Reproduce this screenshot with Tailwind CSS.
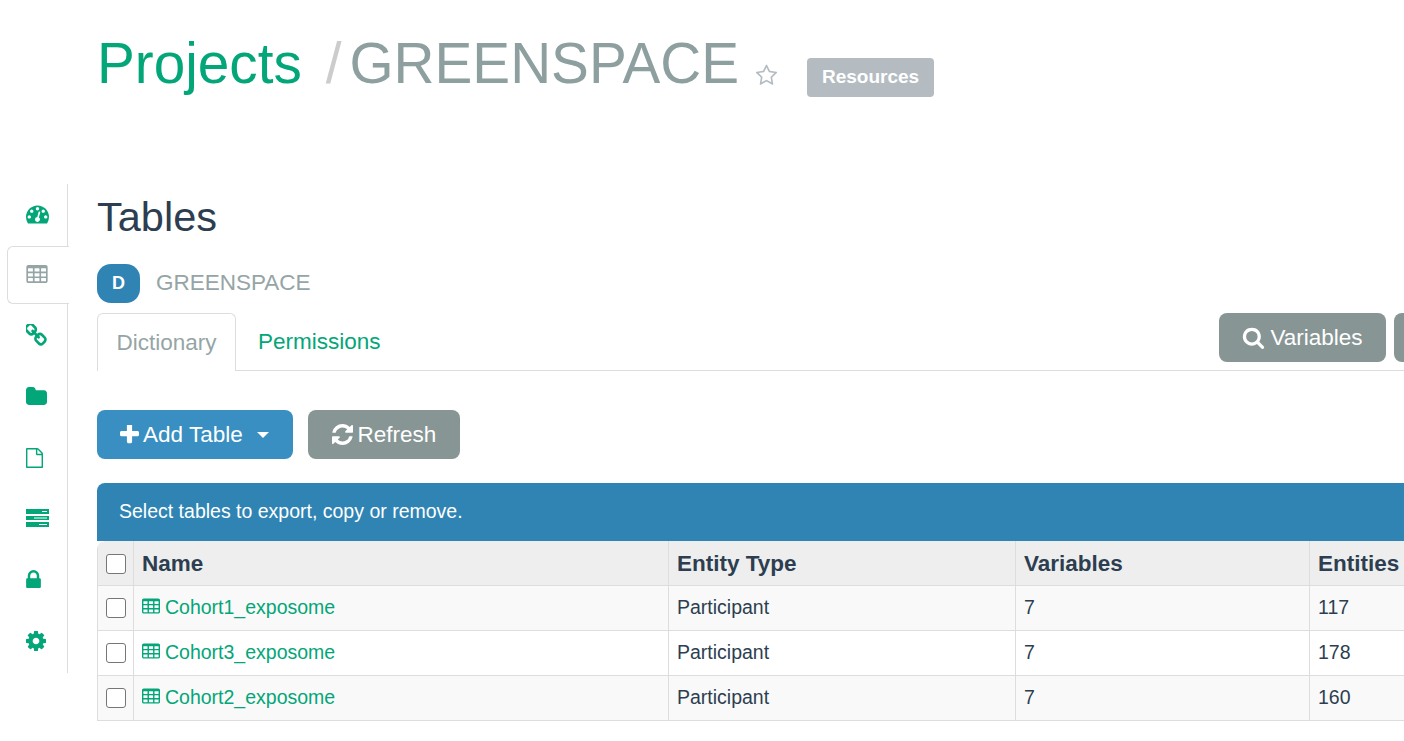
<!DOCTYPE html>
<html lang="en">
<head>
<meta charset="utf-8">
<title>Tables</title>
<script src="https://cdn.jsdelivr.net/npm/@tailwindcss/browser@4"></script>
</head>
<body class="w-[1404px] h-[741px] overflow-hidden bg-white font-['Liberation_Sans',Arial,sans-serif] text-[19.5px] text-[#2c3e50]">
<header class="h-[184px] pl-[97px] pt-[28px] flex items-start">
  <a class="text-[56.7px] leading-[72px] text-[#03a678]">Projects</a>
  <span class="ml-[24px] text-[56.7px] leading-[72px] text-[#ccc]">/</span>
  <span class="ml-[8px] text-[56.7px] leading-[72px] text-[#8e9f9f]">GREENSPACE</span>
  <svg class="ml-[16px] mt-[36px] w-[23px] h-[23px] text-[#b4bcc2]" viewBox="0 0 1792 1792" fill="currentColor"><path d="M1201 1004l306-297-422-62-189-382-189 382-422 62 306 297-73 421 378-199 377 199zm527-357q0 22-26 48l-363 354 86 500q1 7 1 20 0 50-41 50-19 0-40-12l-449-236-449 236q-22 12-40 12-21 0-31.5-14.5t-10.5-35.5q0-6 2-20l86-500-364-354q-25-27-25-48 0-37 56-46l502-73 225-455q19-41 49-41t49 41l225 455 502 73q56 9 56 46z"/></svg>
  <span class="ml-[29px] mt-[30px] w-[127px] h-[39px] rounded-[4px] bg-[#b4bcc2] text-white font-bold text-[19px] flex items-center justify-center">Resources</span>
</header>
<div class="flex">
  <nav class="w-[68px] h-[489px] shrink-0 border-r border-[#ddd] flex flex-col text-[#03a678]">
    <a class="h-[62px] shrink-0 flex items-center pl-[26px] pb-[2px]">
      <svg class="w-[23px] h-[19px]" viewBox="0 256 1792 1408" fill="currentColor"><path d="M384 1152q0-53-37.5-90.5t-90.5-37.5-90.5 37.5-37.5 90.5 37.5 90.5 90.5 37.5 90.5-37.5 37.5-90.5zm192-448q0-53-37.5-90.5t-90.5-37.5-90.5 37.5-37.5 90.5 37.5 90.5 90.5 37.5 90.5-37.5 37.5-90.5zm428 481l101-382q6-26-7.5-48.5t-38.5-29.5-48 6.5-30 39.5l-101 382q-60 5-107 43.5t-63 98.5q-20 77 20 146t117 89 146-20 89-117q16-60-6-117t-72-91zm660-33q0-53-37.5-90.5t-90.5-37.5-90.5 37.5-37.5 90.5 37.5 90.5 90.5 37.5 90.5-37.5 37.5-90.5zm-640-640q0-53-37.5-90.5t-90.5-37.5-90.5 37.5-37.5 90.5 37.5 90.5 90.5 37.5 90.5-37.5 37.5-90.5zm448 192q0-53-37.5-90.5t-90.5-37.5-90.5 37.5-37.5 90.5 37.5 90.5 90.5 37.5 90.5-37.5 37.5-90.5zm320 448q0 261-141 483-19 29-54 29h-1402q-35 0-54-29-141-221-141-483 0-182 71-348t191-286 286-191 348-71 348 71 286 191 191 286 71 348z"/></svg>
    </a>
    <a class="h-[58px] shrink-0 ml-[7px] w-[62px] pl-[18px] pb-[2px] bg-white border border-r-0 border-[#ddd] rounded-l-[6px] flex items-center text-[#95a5a6] relative">
      <svg class="w-[22px] h-[18px]" viewBox="64 128 1664 1408" fill="currentColor"><path d="M576 1376v-192q0-14-9-23t-23-9h-320q-14 0-23 9t-9 23v192q0 14 9 23t23 9h320q14 0 23-9t9-23zm0-384v-192q0-14-9-23t-23-9h-320q-14 0-23 9t-9 23v192q0 14 9 23t23 9h320q14 0 23-9t9-23zm512 384v-192q0-14-9-23t-23-9h-320q-14 0-23 9t-9 23v192q0 14 9 23t23 9h320q14 0 23-9t9-23zm-512-768v-192q0-14-9-23t-23-9h-320q-14 0-23 9t-9 23v192q0 14 9 23t23 9h320q14 0 23-9t9-23zm512 384v-192q0-14-9-23t-23-9h-320q-14 0-23 9t-9 23v192q0 14 9 23t23 9h320q14 0 23-9t9-23zm512 384v-192q0-14-9-23t-23-9h-320q-14 0-23 9t-9 23v192q0 14 9 23t23 9h320q14 0 23-9t9-23zm-512-768v-192q0-14-9-23t-23-9h-320q-14 0-23 9t-9 23v192q0 14 9 23t23 9h320q14 0 23-9t9-23zm512 384v-192q0-14-9-23t-23-9h-320q-14 0-23 9t-9 23v192q0 14 9 23t23 9h320q14 0 23-9t9-23zm0-384v-192q0-14-9-23t-23-9h-320q-14 0-23 9t-9 23v192q0 14 9 23t23 9h320q14 0 23-9t9-23zm128-320v1088q0 66-47 113t-113 47h-1344q-66 0-113-47t-47-113v-1088q0-66 47-113t113-47h1344q66 0 113 47t47 113z"/></svg>
    </a>
    <a class="h-[61px] shrink-0 flex items-center pl-[26px]">
      <svg class="w-[21px] h-[22px]" viewBox="128 128 1536 1536" preserveAspectRatio="none" fill="currentColor"><path d="M1456 1216q0-40-28-68l-208-208q-28-28-68-28-42 0-72 32 3 3 19 18.5t21.5 21.5 15 19 13 25.5 3.5 27.5q0 40-28 68t-68 28q-15 0-27.5-3.5t-25.5-13-19-15-21.5-21.5-18.5-19q-33 31-33 73 0 40 28 68l206 207q27 27 68 27 40 0 68-26l147-146q28-28 28-67zm-703-705q0-40-28-68l-206-207q-28-28-68-28-39 0-68 27l-147 146q-28 28-28 67 0 40 28 68l208 208q27 27 68 27 42 0 72-31-3-3-19-18.5t-21.5-21.5-15-19-13-25.5-3.5-27.5q0-40 28-68t68-28q15 0 27.5 3.5t25.5 13 19 15 21.5 21.5 18.5 19q33-31 33-73zm895 705q0 120-85 203l-147 146q-83 83-203 83-121 0-204-85l-206-207q-83-83-83-203 0-123 88-209l-88-88q-86 88-208 88-120 0-204-84l-208-208q-84-84-84-204t85-203l147-146q83-83 203-83 121 0 204 85l206 207q83 83 83 203 0 123-88 209l88 88q86-88 208-88 120 0 204 84l208 208q84 84 84 204z"/></svg>
    </a>
    <a class="h-[61px] shrink-0 flex items-center pl-[26px]">
      <svg class="w-[21px] h-[18px]" viewBox="64 128 1664 1408" fill="currentColor"><path d="M1728 608v704q0 92-66 158t-158 66h-1216q-92 0-158-66t-66-158v-960q0-92 66-158t158-66h320q92 0 158 66t66 158v32h672q92 0 158 66t66 158z"/></svg>
    </a>
    <a class="h-[61px] shrink-0 flex items-center pl-[26px] pt-[2px]">
      <svg class="w-[17px] h-[20px]" viewBox="128 0 1536 1792" preserveAspectRatio="none" fill="currentColor"><path d="M1596 380q28 28 48 76t20 88v1152q0 40-28 68t-68 28h-1344q-40 0-68-28t-28-68v-1600q0-40 28-68t68-28h896q40 0 88 20t76 48zm-444-244v376h376q-10-29-22-41l-313-313q-12-12-41-22zm384 1528v-1024h-416q-40 0-68-28t-28-68v-416h-768v1536h1280z"/></svg>
    </a>
    <a class="h-[61px] shrink-0 flex items-center pl-[26px]">
      <svg class="w-[23px] h-[18px]" viewBox="0 0 23 18" fill="currentColor"><path fill-rule="evenodd" d="M0 0h23v5H0zM16 2v1h5V2zM0 7h23v4H0zM8 8.500v1h13v-1zM0 13h23v5H0zM13 15v1h8v-1z"/></svg>
    </a>
    <a class="h-[61px] shrink-0 flex items-center pl-[26px]">
      <svg class="w-[15px] h-[18px]" viewBox="320 128 1152 1408" fill="currentColor"><path d="M640 768h512v-192q0-106-75-181t-181-75-181 75-75 181v192zm832 96v576q0 40-28 68t-68 28h-960q-40 0-68-28t-28-68v-576q0-40 28-68t68-28h32v-192q0-184 132-316t316-132 316 132 132 316v192h32q40 0 68 28t28 68z"/></svg>
    </a>
    <a class="h-[61px] shrink-0 flex items-center pl-[26px] pt-[2px]">
      <svg class="w-[20px] h-[20px]" viewBox="128 128 1536 1536" fill="currentColor"><path d="M1152 896q0-106-75-181t-181-75-181 75-75 181 75 181 181 75 181-75 75-181zm512-109v222q0 12-8 23t-20 13l-185 28q-19 54-39 91 35 50 107 138 10 12 10 25t-9 23q-27 37-99 108t-94 71q-12 0-26-9l-138-108q-44 23-91 38-16 136-29 186-7 28-36 28h-222q-14 0-24.5-8.500t-11.5-21.5l-28-184q-49-16-90-37l-141 107q-10 9-25 9-14 0-25-11-126-114-165-168-7-10-7-23 0-12 8-23 15-21 51-66.5t54-70.5q-27-50-41-99l-183-27q-13-2-21-12.5t-8-23.5v-222q0-12 8-23t19-13l186-28q14-46 39-92-40-57-107-138-10-12-10-24 0-10 9-23 26-36 98.5-107.5t94.5-71.5q13 0 26 10l138 107q44-23 91-38 16-136 29-186 7-28 36-28h222q14 0 24.5 8.5t11.5 21.5l28 184q49 16 90 37l142-107q9-9 24-9 13 0 25 10 129 119 165 170 7 8 7 22 0 12-8 23-15 21-51 66.5t-54 70.5q26 50 41 98l183 28q13 2 21 12.5t8 23.5z"/></svg>
    </a>
  </nav>
  <main class="pl-[29px] w-[1336px] shrink-0">
    <h1 class="text-[41.5px] leading-[48px] mt-[9px]">Tables</h1>
    <div class="flex items-center mt-[22px] h-[40px] text-[22.5px] text-[#95a5a6]">
      <span class="w-[43px] h-[39px] rounded-[14px] bg-[#2f84b4] text-white text-[18px] font-bold flex items-center justify-center">D</span>
      <span class="ml-[16px]">GREENSPACE</span>
    </div>
    <div class="relative mt-[10px] h-[58px] border-b border-[#ddd] text-[22.5px] flex w-[1400px]">
      <a class="w-[139px] h-[58px] border border-b-0 border-[#ddd] rounded-t-[6px] bg-white text-[#95a5a6] flex items-center justify-center">Dictionary</a>
      <a class="ml-[22px] h-[58px] text-[#03a678] flex items-center">Permissions</a>
      <div class="absolute left-[1122px] top-0 flex gap-[8px]">
        <button class="w-[167px] h-[49px] rounded-[8px] bg-[#889595] text-white flex items-center justify-center gap-[5px]">
          <svg class="w-[23px] h-[23px]" viewBox="0 0 1792 1792" fill="currentColor"><path d="M1216 832q0-185-131.5-316.5t-316.5-131.5-316.5 131.5-131.5 316.5 131.5 316.5 316.5 131.5 316.5-131.5 131.5-316.5zm512 832q0 52-38 90t-90 38q-54 0-90-38l-343-342q-179 124-399 124-143 0-273.5-55.5t-225-150-150-225-55.5-273.5 55.5-273.5 150-225 225-150 273.5-55.5 273.5 55.5 225 150 150 225 55.5 273.5q0 220-124 399l343 343q37 37 37 90z"/></svg>
          Variables</button>
        <button class="w-[120px] h-[49px] rounded-[8px] bg-[#889595]"></button>
      </div>
    </div>
    <div class="flex mt-[39px] gap-[15px] text-[22.5px] text-white">
      <button class="w-[196px] h-[49px] rounded-[8px] bg-[#3a8fc2] flex items-center pl-[23px]">
        <svg class="w-[19px] h-[19px] mr-[4px]" viewBox="192 192 1408 1408" fill="currentColor"><path d="M1600 736v192q0 40-28 68t-68 28h-416v416q0 40-28 68t-68 28h-192q-40 0-68-28t-28-68v-416h-416q-40 0-68-28t-28-68v-192q0-40 28-68t68-28h416v-416q0-40 28-68t68-28h192q40 0 68 28t28 68v416h416q40 0 68 28t28 68z"/></svg>
        Add Table
        <span class="ml-[14px] w-0 h-0 border-x-[6.5px] border-x-transparent border-t-[6.5px] border-t-white"></span>
      </button>
      <button class="w-[152px] h-[49px] rounded-[8px] bg-[#889595] flex items-center justify-center gap-[5px]">
        <svg class="w-[21px] h-[21px]" viewBox="128 128 1536 1536" fill="currentColor"><path d="M1639 1056q0 5-1 7-64 268-268 434.5t-478 166.5q-146 0-282.5-55t-243.5-157l-129 129q-19 19-45 19t-45-19-19-45v-448q0-26 19-45t45-19h448q26 0 45 19t19 45-19 45l-137 137q71 66 161 102t187 36q134 0 250-65t186-179q11-17 53-117 8-23 30-23h192q13 0 22.5 9.5t9.5 22.5zm25-800v448q0 26-19 45t-45 19h-448q-26 0-45-19t-19-45 19-45l138-138q-148-137-349-137-134 0-250 65t-186 179q-11 17-53 117-8 23-30 23h-199q-13 0-22.5-9.5t-9.5-22.5v-7q65-268 270-434.5t480-166.5q146 0 284 55.5t245 156.5l130-129q19-19 45-19t45 19 19 45z"/></svg>
        Refresh</button>
    </div>
    <div class="mt-[24px] h-[58px] w-[1400px] rounded-tl-[8px] bg-[#2f84b4] text-white pl-[22px] flex items-center">Select tables to export, copy or remove.</div>
    <table class="table-fixed w-[1500px] border-collapse border-l border-[#ddd]">
      <colgroup><col class="w-[36px]"><col class="w-[535px]"><col class="w-[347px]"><col class="w-[294px]"><col></colgroup>
      <thead>
        <tr class="h-[44px] bg-[#eeeeee] text-[22.5px] font-bold text-left border-b border-[#ddd]">
          <th class="relative border-r border-[#ddd] pl-[8px] pt-[2px] font-normal"><span class="absolute -left-px top-0 w-[7px] h-[7px] bg-[radial-gradient(circle_at_100%_100%,transparent_6px,white_7px)]"></span><input type="checkbox" class="block appearance-none w-[20px] h-[20px] bg-white border border-[#767676] rounded-[3px]"></th>
          <th class="border-r border-[#ddd] pl-[8px] pt-[2px]">Name</th>
          <th class="border-r border-[#ddd] pl-[8px] pt-[2px]">Entity Type</th>
          <th class="border-r border-[#ddd] pl-[8px] pt-[2px]">Variables</th>
          <th class="pl-[8px] pt-[2px]">Entities</th>
        </tr>
      </thead>
      <tbody>
        <tr class="h-[45px] bg-[#f9f9f9] border-b border-[#ddd]">
          <td class="border-r border-[#ddd] pl-[8px]"><input type="checkbox" class="block appearance-none w-[20px] h-[20px] bg-white border border-[#767676] rounded-[3px]"></td>
          <td class="border-r border-[#ddd] pl-[8px]"><a class="flex items-center text-[#03a678]"><svg class="w-[18px] h-[16px] mr-[5px] -mt-[3px]" viewBox="64 128 1664 1408" fill="currentColor"><path d="M576 1376v-192q0-14-9-23t-23-9h-320q-14 0-23 9t-9 23v192q0 14 9 23t23 9h320q14 0 23-9t9-23zm0-384v-192q0-14-9-23t-23-9h-320q-14 0-23 9t-9 23v192q0 14 9 23t23 9h320q14 0 23-9t9-23zm512 384v-192q0-14-9-23t-23-9h-320q-14 0-23 9t-9 23v192q0 14 9 23t23 9h320q14 0 23-9t9-23zm-512-768v-192q0-14-9-23t-23-9h-320q-14 0-23 9t-9 23v192q0 14 9 23t23 9h320q14 0 23-9t9-23zm512 384v-192q0-14-9-23t-23-9h-320q-14 0-23 9t-9 23v192q0 14 9 23t23 9h320q14 0 23-9t9-23zm512 384v-192q0-14-9-23t-23-9h-320q-14 0-23 9t-9 23v192q0 14 9 23t23 9h320q14 0 23-9t9-23zm-512-768v-192q0-14-9-23t-23-9h-320q-14 0-23 9t-9 23v192q0 14 9 23t23 9h320q14 0 23-9t9-23zm512 384v-192q0-14-9-23t-23-9h-320q-14 0-23 9t-9 23v192q0 14 9 23t23 9h320q14 0 23-9t9-23zm0-384v-192q0-14-9-23t-23-9h-320q-14 0-23 9t-9 23v192q0 14 9 23t23 9h320q14 0 23-9t9-23zm128-320v1088q0 66-47 113t-113 47h-1344q-66 0-113-47t-47-113v-1088q0-66 47-113t113-47h1344q66 0 113 47t47 113z"/></svg>Cohort1_exposome</a></td>
          <td class="border-r border-[#ddd] pl-[8px]">Participant</td>
          <td class="border-r border-[#ddd] pl-[8px]">7</td>
          <td class="pl-[8px]">117</td>
        </tr>
        <tr class="h-[45px] bg-white border-b border-[#ddd]">
          <td class="border-r border-[#ddd] pl-[8px]"><input type="checkbox" class="block appearance-none w-[20px] h-[20px] bg-white border border-[#767676] rounded-[3px]"></td>
          <td class="border-r border-[#ddd] pl-[8px]"><a class="flex items-center text-[#03a678]"><svg class="w-[18px] h-[16px] mr-[5px] -mt-[3px]" viewBox="64 128 1664 1408" fill="currentColor"><path d="M576 1376v-192q0-14-9-23t-23-9h-320q-14 0-23 9t-9 23v192q0 14 9 23t23 9h320q14 0 23-9t9-23zm0-384v-192q0-14-9-23t-23-9h-320q-14 0-23 9t-9 23v192q0 14 9 23t23 9h320q14 0 23-9t9-23zm512 384v-192q0-14-9-23t-23-9h-320q-14 0-23 9t-9 23v192q0 14 9 23t23 9h320q14 0 23-9t9-23zm-512-768v-192q0-14-9-23t-23-9h-320q-14 0-23 9t-9 23v192q0 14 9 23t23 9h320q14 0 23-9t9-23zm512 384v-192q0-14-9-23t-23-9h-320q-14 0-23 9t-9 23v192q0 14 9 23t23 9h320q14 0 23-9t9-23zm512 384v-192q0-14-9-23t-23-9h-320q-14 0-23 9t-9 23v192q0 14 9 23t23 9h320q14 0 23-9t9-23zm-512-768v-192q0-14-9-23t-23-9h-320q-14 0-23 9t-9 23v192q0 14 9 23t23 9h320q14 0 23-9t9-23zm512 384v-192q0-14-9-23t-23-9h-320q-14 0-23 9t-9 23v192q0 14 9 23t23 9h320q14 0 23-9t9-23zm0-384v-192q0-14-9-23t-23-9h-320q-14 0-23 9t-9 23v192q0 14 9 23t23 9h320q14 0 23-9t9-23zm128-320v1088q0 66-47 113t-113 47h-1344q-66 0-113-47t-47-113v-1088q0-66 47-113t113-47h1344q66 0 113 47t47 113z"/></svg>Cohort3_exposome</a></td>
          <td class="border-r border-[#ddd] pl-[8px]">Participant</td>
          <td class="border-r border-[#ddd] pl-[8px]">7</td>
          <td class="pl-[8px]">178</td>
        </tr>
        <tr class="h-[45px] bg-[#f9f9f9] border-b border-[#ddd]">
          <td class="border-r border-[#ddd] pl-[8px]"><input type="checkbox" class="block appearance-none w-[20px] h-[20px] bg-white border border-[#767676] rounded-[3px]"></td>
          <td class="border-r border-[#ddd] pl-[8px]"><a class="flex items-center text-[#03a678]"><svg class="w-[18px] h-[16px] mr-[5px] -mt-[3px]" viewBox="64 128 1664 1408" fill="currentColor"><path d="M576 1376v-192q0-14-9-23t-23-9h-320q-14 0-23 9t-9 23v192q0 14 9 23t23 9h320q14 0 23-9t9-23zm0-384v-192q0-14-9-23t-23-9h-320q-14 0-23 9t-9 23v192q0 14 9 23t23 9h320q14 0 23-9t9-23zm512 384v-192q0-14-9-23t-23-9h-320q-14 0-23 9t-9 23v192q0 14 9 23t23 9h320q14 0 23-9t9-23zm-512-768v-192q0-14-9-23t-23-9h-320q-14 0-23 9t-9 23v192q0 14 9 23t23 9h320q14 0 23-9t9-23zm512 384v-192q0-14-9-23t-23-9h-320q-14 0-23 9t-9 23v192q0 14 9 23t23 9h320q14 0 23-9t9-23zm512 384v-192q0-14-9-23t-23-9h-320q-14 0-23 9t-9 23v192q0 14 9 23t23 9h320q14 0 23-9t9-23zm-512-768v-192q0-14-9-23t-23-9h-320q-14 0-23 9t-9 23v192q0 14 9 23t23 9h320q14 0 23-9t9-23zm512 384v-192q0-14-9-23t-23-9h-320q-14 0-23 9t-9 23v192q0 14 9 23t23 9h320q14 0 23-9t9-23zm0-384v-192q0-14-9-23t-23-9h-320q-14 0-23 9t-9 23v192q0 14 9 23t23 9h320q14 0 23-9t9-23zm128-320v1088q0 66-47 113t-113 47h-1344q-66 0-113-47t-47-113v-1088q0-66 47-113t113-47h1344q66 0 113 47t47 113z"/></svg>Cohort2_exposome</a></td>
          <td class="border-r border-[#ddd] pl-[8px]">Participant</td>
          <td class="border-r border-[#ddd] pl-[8px]">7</td>
          <td class="pl-[8px]">160</td>
        </tr>
      </tbody>
    </table>
  </main>
</div>
</body>
</html>
